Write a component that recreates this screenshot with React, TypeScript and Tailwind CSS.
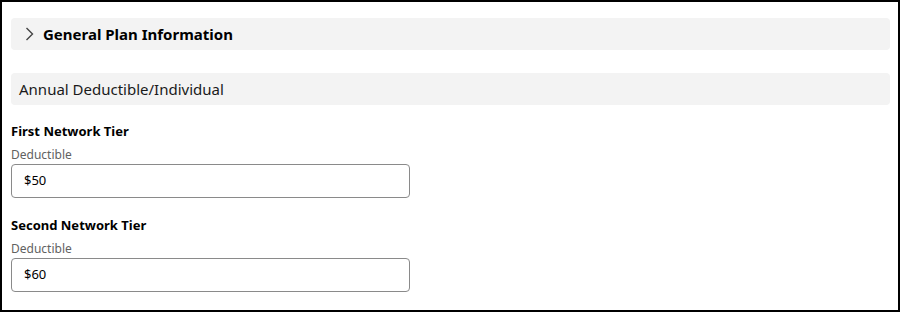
import React from "react";

function Field({ title, value }: { title: string; value: string }) {
  return (
    <div className="flex flex-col">
      <div className="text-[13px] font-bold leading-[20px] text-black">{title}</div>
      <div className="mt-[6px] text-[12px] leading-[16px] text-[#616161]">Deductible</div>
      <div className="mt-[1px] flex h-[34px] w-[399px] items-center rounded-[4px] border border-[#8a8a8a] pl-[12px] text-[13px] text-black">
        {value}
      </div>
    </div>
  );
}

export default function App() {
  return (
    <div
      className="h-[312px] w-[900px] border-2 border-black bg-white"
      style={{ fontFamily: '"Noto Sans", "Open Sans", sans-serif' }}
    >
      <div className="flex flex-col pl-[9px] pr-[8px] pt-[16px]">
        <div className="flex h-[32px] items-center rounded-[4px] bg-[#f3f3f3] pl-[12px]">
          <svg width="12" height="16" viewBox="0 0 12 16" className="text-[#444]">
            <path d="M3.5 2 L9.5 8 L3.5 14" fill="none" stroke="currentColor" strokeWidth="1.4" />
          </svg>
          <span className="ml-[8px] text-[15px] font-bold text-black">General Plan Information</span>
        </div>
        <div className="mt-[23px] flex h-[32px] items-center rounded-[4px] bg-[#f3f3f3] pl-[8px]">
          <span className="text-[15px] text-[#1a1a1a]">Annual Deductible/Individual</span>
        </div>
        <div className="mt-[16px]">
          <Field title="First Network Tier" value="$50" />
        </div>
        <div className="mt-[17px]">
          <Field title="Second Network Tier" value="$60" />
        </div>
      </div>
    </div>
  );
}
